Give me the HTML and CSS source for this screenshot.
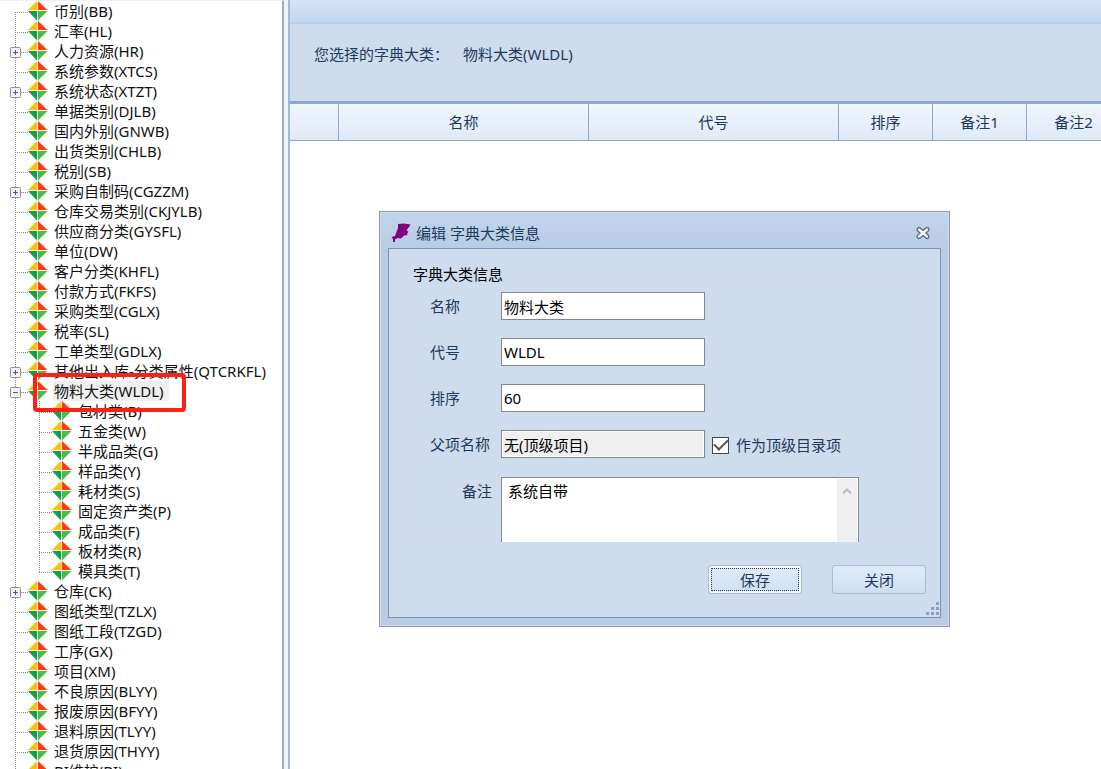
FILE: index.html
```
<!DOCTYPE html>
<html lang="zh-CN">
<head>
<meta charset="utf-8">
<title>字典大类</title>
<link rel="stylesheet" href="styles.css">
</head>
<body>
<svg class="defs" aria-hidden="true">
  <symbol id="gem" viewBox="0 0 20 20">
    <path fill="#ffc000" d="M9 0V9H0z"/>
    <path fill="#ff3a12" d="M10 0V9H19.500z"/>
    <path fill="#0ea04b" d="M0 10H9V19.500z"/>
    <path fill="#4cbb4c" d="M10 10H19.500L10 19.500z"/>
  </symbol>
  <symbol id="plus" viewBox="0 0 11 11">
    <rect x=".5" y=".5" width="10" height="10" rx="1" fill="#f3f3f3" stroke="#919191"/>
    <path d="M3 5.500h5M5.500 3v5" stroke="#3e57a8"/>
  </symbol>
  <symbol id="minus" viewBox="0 0 11 11">
    <rect x=".5" y=".5" width="10" height="10" rx="1" fill="#f3f3f3" stroke="#919191"/>
    <path d="M3 5.500h5" stroke="#3e57a8"/>
  </symbol>
</svg>
<div class="app">
  <nav class="sidebar" aria-label="字典">
    <ul class="tree">
      <li><div class="row"><span class="slot"></span><svg class="gem"><use href="#gem"/></svg><span class="name">币别(BB)</span></div></li>
      <li><div class="row"><span class="slot"></span><svg class="gem"><use href="#gem"/></svg><span class="name">汇率(HL)</span></div></li>
      <li><div class="row"><button class="slot" aria-label="展开"><svg><use href="#plus"/></svg></button><svg class="gem"><use href="#gem"/></svg><span class="name">人力资源(HR)</span></div></li>
      <li><div class="row"><span class="slot"></span><svg class="gem"><use href="#gem"/></svg><span class="name">系统参数(XTCS)</span></div></li>
      <li><div class="row"><button class="slot" aria-label="展开"><svg><use href="#plus"/></svg></button><svg class="gem"><use href="#gem"/></svg><span class="name">系统状态(XTZT)</span></div></li>
      <li><div class="row"><span class="slot"></span><svg class="gem"><use href="#gem"/></svg><span class="name">单据类别(DJLB)</span></div></li>
      <li><div class="row"><span class="slot"></span><svg class="gem"><use href="#gem"/></svg><span class="name">国内外别(GNWB)</span></div></li>
      <li><div class="row"><span class="slot"></span><svg class="gem"><use href="#gem"/></svg><span class="name">出货类别(CHLB)</span></div></li>
      <li><div class="row"><span class="slot"></span><svg class="gem"><use href="#gem"/></svg><span class="name">税别(SB)</span></div></li>
      <li><div class="row"><button class="slot" aria-label="展开"><svg><use href="#plus"/></svg></button><svg class="gem"><use href="#gem"/></svg><span class="name">采购自制码(CGZZM)</span></div></li>
      <li><div class="row"><span class="slot"></span><svg class="gem"><use href="#gem"/></svg><span class="name">仓库交易类别(CKJYLB)</span></div></li>
      <li><div class="row"><span class="slot"></span><svg class="gem"><use href="#gem"/></svg><span class="name">供应商分类(GYSFL)</span></div></li>
      <li><div class="row"><span class="slot"></span><svg class="gem"><use href="#gem"/></svg><span class="name">单位(DW)</span></div></li>
      <li><div class="row"><span class="slot"></span><svg class="gem"><use href="#gem"/></svg><span class="name">客户分类(KHFL)</span></div></li>
      <li><div class="row"><span class="slot"></span><svg class="gem"><use href="#gem"/></svg><span class="name">付款方式(FKFS)</span></div></li>
      <li><div class="row"><span class="slot"></span><svg class="gem"><use href="#gem"/></svg><span class="name">采购类型(CGLX)</span></div></li>
      <li><div class="row"><span class="slot"></span><svg class="gem"><use href="#gem"/></svg><span class="name">税率(SL)</span></div></li>
      <li><div class="row"><span class="slot"></span><svg class="gem"><use href="#gem"/></svg><span class="name">工单类型(GDLX)</span></div></li>
      <li><div class="row"><button class="slot" aria-label="展开"><svg><use href="#plus"/></svg></button><svg class="gem"><use href="#gem"/></svg><span class="name">其他出入库-分类属性(QTCRKFL)</span></div></li>
      <li>
        <div class="row selected"><button class="slot" aria-label="折叠"><svg><use href="#minus"/></svg></button><svg class="gem"><use href="#gem"/></svg><span class="name">物料大类(WLDL)</span><span class="marker"></span></div>
        <ul class="children">
          <li><div class="row"><svg class="gem"><use href="#gem"/></svg><span class="name">包材类(B)</span></div></li>
          <li><div class="row"><svg class="gem"><use href="#gem"/></svg><span class="name">五金类(W)</span></div></li>
          <li><div class="row"><svg class="gem"><use href="#gem"/></svg><span class="name">半成品类(G)</span></div></li>
          <li><div class="row"><svg class="gem"><use href="#gem"/></svg><span class="name">样品类(Y)</span></div></li>
          <li><div class="row"><svg class="gem"><use href="#gem"/></svg><span class="name">耗材类(S)</span></div></li>
          <li><div class="row"><svg class="gem"><use href="#gem"/></svg><span class="name">固定资产类(P)</span></div></li>
          <li><div class="row"><svg class="gem"><use href="#gem"/></svg><span class="name">成品类(F)</span></div></li>
          <li><div class="row"><svg class="gem"><use href="#gem"/></svg><span class="name">板材类(R)</span></div></li>
          <li><div class="row"><svg class="gem"><use href="#gem"/></svg><span class="name">模具类(T)</span></div></li>
        </ul>
      </li>
      <li><div class="row"><button class="slot" aria-label="展开"><svg><use href="#plus"/></svg></button><svg class="gem"><use href="#gem"/></svg><span class="name">仓库(CK)</span></div></li>
      <li><div class="row"><span class="slot"></span><svg class="gem"><use href="#gem"/></svg><span class="name">图纸类型(TZLX)</span></div></li>
      <li><div class="row"><span class="slot"></span><svg class="gem"><use href="#gem"/></svg><span class="name">图纸工段(TZGD)</span></div></li>
      <li><div class="row"><span class="slot"></span><svg class="gem"><use href="#gem"/></svg><span class="name">工序(GX)</span></div></li>
      <li><div class="row"><span class="slot"></span><svg class="gem"><use href="#gem"/></svg><span class="name">项目(XM)</span></div></li>
      <li><div class="row"><span class="slot"></span><svg class="gem"><use href="#gem"/></svg><span class="name">不良原因(BLYY)</span></div></li>
      <li><div class="row"><span class="slot"></span><svg class="gem"><use href="#gem"/></svg><span class="name">报废原因(BFYY)</span></div></li>
      <li><div class="row"><span class="slot"></span><svg class="gem"><use href="#gem"/></svg><span class="name">退料原因(TLYY)</span></div></li>
      <li><div class="row"><span class="slot"></span><svg class="gem"><use href="#gem"/></svg><span class="name">退货原因(THYY)</span></div></li>
      <li><div class="row"><span class="slot"></span><svg class="gem"><use href="#gem"/></svg><span class="name">BI维护(BI)</span></div></li>
    </ul>
  </nav>

  <main class="main">
    <div class="caption"></div>
    <div class="info"><span>您选择的字典大类：</span><span>物料大类(WLDL)</span></div>
    <table class="grid">
      <thead>
        <tr><th class="mark"></th><th class="wide">名称</th><th class="wide">代号</th><th>排序</th><th>备注1</th><th>备注2</th></tr>
      </thead>
    </table>
  </main>
</div>

<section class="dialog" role="dialog" aria-labelledby="dlg-title">
  <header class="titlebar">
    <svg class="logo" viewBox="0 0 20 20"><path fill="#800080" d="M7 1L13 0.500 19.500 1.500 18 4 15.500 7 17.500 9 16 10.500 16.500 12 13 12.500 10 15.500 6.500 15 4 16.500 4 19 2 19 2 16 0.500 14 4 13 5.500 9 7 5z"/></svg>
    <h1 id="dlg-title">编辑 字典大类信息</h1>
    <button class="close" aria-label="关闭窗口"><svg viewBox="0 0 16 14"><path d="M4 3.500L12 10.500M12 3.500L4 10.500" stroke="#5c6780" stroke-width="5" stroke-linecap="round"/><path d="M4 3.500L12 10.500M12 3.500L4 10.500" stroke="#f4f7fc" stroke-width="2.500" stroke-linecap="round"/></svg></button>
  </header>
  <form class="body">
    <fieldset>
      <legend>字典大类信息</legend>
      <div class="field"><label for="f-name">名称</label><input id="f-name" type="text" value="物料大类"></div>
      <div class="field"><label for="f-code">代号</label><input id="f-code" type="text" value="WLDL"></div>
      <div class="field"><label for="f-order">排序</label><input id="f-order" type="text" value="60"></div>
      <div class="field"><label for="f-parent">父项名称</label><input id="f-parent" type="text" value="无(顶级项目)" readonly>
        <label class="check"><input type="checkbox" checked>作为顶级目录项</label></div>
      <div class="field memo"><label for="f-memo">备注</label>
        <div class="memobox"><textarea id="f-memo">系统自带</textarea><span class="scroll"><svg viewBox="0 0 10 8"><path d="M1 6.500L5 2.500 9 6.500" fill="none" stroke="#bdbdbd" stroke-width="2"/></svg></span></div></div>
    </fieldset>
    <div class="actions"><button type="button" class="focused">保存</button><button type="button">关闭</button></div>
    <svg class="grip" viewBox="0 0 14 14" fill="#8ba1bf"><path d="M11 0h3v3h-3zM6 5h3v3h-3zM11 5h3v3h-3zM1 10h3v3h-3zM6 10h3v3h-3zM11 10h3v3h-3z"/></svg>
  </form>
</section>
</body>
</html>
```
FILE: styles.css
```
* { box-sizing: border-box; }
body {
  margin: 0;
  height: 100vh;
  overflow: hidden;
  position: relative;
  background: #fff;
  color: #1e395b;
  font: 15px/20px "Noto Sans", "Noto Sans CJK SC", sans-serif;
}
button, input, textarea { font: inherit; color: inherit; margin: 0; }
.defs { position: absolute; width: 0; height: 0; }

.app { display: flex; height: 100%; background: #f0f3f8; }

.sidebar {
  flex: 0 0 284px;
  overflow: hidden;
  background: #fff;
  border-top: 1px solid #f0f0f0;
  border-right: 2px solid #a6acb5;
  color: #111;
}
.tree, .children { list-style: none; margin: 0; padding: 0; }
.tree {
  background: repeating-linear-gradient(to bottom, #8c8c8c 0 1px, transparent 1px 2px) 15px 11px / 1px 100% no-repeat;
}
.children {
  background: repeating-linear-gradient(to bottom, #8c8c8c 0 1px, transparent 1px 2px) 39px 0 / 1px 171px no-repeat;
}
.row {
  position: relative;
  display: flex;
  align-items: center;
  height: 20px;
  padding-left: 10px;
  white-space: nowrap;
  background: repeating-linear-gradient(to right, #8c8c8c 0 1px, transparent 1px 2px) 15px 11px / 13px 1px no-repeat;
}
.children .row { padding-left: 52px; background-position: 39px 11px; }
.slot {
  display: flex;
  width: 11px;
  height: 11px;
  margin: 2px 7px 0 0;
  padding: 0;
  border: 0;
  background: none;
}
.slot svg { width: 11px; height: 11px; }
.gem { width: 20px; height: 20px; flex: none; }
.name { margin-left: 5px; padding: 0 1px; }
.selected .name { background: #efefef; padding-right: 5px; }
.marker {
  position: absolute;
  z-index: 1;
  left: 33px;
  top: -8px;
  width: 153px;
  height: 39px;
  border: 4px solid #fe2015;
  border-radius: 4px;
}

.main {
  flex: 1;
  min-width: 0;
  margin-left: 4px;
  overflow: hidden;
  background: #fff;
  border-left: 2px solid #a3b9d8;
}
.caption {
  height: 24px;
  background: linear-gradient(#d4e4f7, #c3d7f0);
  border-bottom: 2px solid #b8cfe8;
}
.info {
  display: flex;
  gap: 14px;
  height: 80px;
  padding: 20px 24px;
  background: #cfdced;
  border-bottom: 3px solid #8fa7c8;
}
.grid { table-layout: fixed; width: 831px; border-collapse: separate; border-spacing: 0; }
.grid th {
  width: 94px;
  height: 37px;
  padding: 0;
  font-weight: 400;
  text-align: center;
  background: linear-gradient(#f0f5fd, #dfeaf8);
  border-right: 1px solid #8fa8cb;
  border-bottom: 1px solid #8aa5ca;
}
.grid .mark { width: 49px; }
.grid .wide { width: 250px; }

.dialog {
  position: absolute;
  left: 379px;
  top: 211px;
  width: 571px;
  padding: 0 8px 8px;
  background: linear-gradient(#c3d5ec, #bacce5 36px);
  border: 1px solid #8d9aae;
  box-shadow: inset 0 0 0 1px #cbdcf0;
}
.titlebar { display: flex; align-items: center; height: 36px; padding: 6px 10px 0 3px; }
.logo { width: 20px; height: 20px; }
.titlebar h1 { flex: 1; margin: 0 0 0 5px; font-size: 15px; font-weight: 400; }
.close { display: flex; width: 16px; height: 14px; padding: 0; border: 0; background: none; }
.close svg { width: 16px; height: 14px; }

.body {
  position: relative;
  padding: 15px 14px 23px;
  background: #cfdced;
  border: 1px solid #7695bd;
}
fieldset { margin: 0; padding: 8px 0 0 26px; border: 1px solid #d9dbde; min-width: 0; }
legend { margin-left: -19px; padding: 0 2px; color: #000; }
.field { display: flex; align-items: center; height: 28px; margin-bottom: 18px; }
.field > label:first-child { flex: 0 0 71px; }
.field > input {
  width: 204px;
  height: 28px;
  padding: 0 2px;
  color: #000;
  background: #fff;
  border: 1px solid #85888c;
  border-radius: 0;
}
.field > input[readonly] { background: #efefef; box-shadow: inset 0 0 0 1px #fff; }
.check { display: flex; align-items: center; gap: 7px; margin-left: 7px; padding-top: 2px; }
.check input {
  appearance: none;
  width: 17px;
  height: 17px;
  border: 1px solid #444;
  background: #fff;
  display: grid;
  place-items: center;
}
.check input:checked::before {
  content: "";
  width: 12px;
  height: 6px;
  border: solid #555;
  border-width: 0 0 2px 2px;
  transform: translateY(-2px) rotate(-45deg);
}
.memo { align-items: flex-start; height: 65px; margin: 19px 0 -1px; }
.memo > label:first-child { padding: 4px 9px 0 0; text-align: right; }
.memobox {
  display: flex;
  width: 358px;
  height: 65px;
  background: #fff;
  border: 1px solid #85888c;
  border-bottom: 0;
}
.memobox textarea {
  flex: 1;
  min-width: 0;
  padding: 3px 6px;
  border: 0;
  color: #000;
  background: none;
  resize: none;
  overflow: hidden;
}
.scroll { width: 20px; margin: 1px 1px 0 0; padding: 8px 5px; background: #efefef; }
.scroll svg { display: block; width: 10px; height: 8px; }

.actions { display: flex; justify-content: flex-end; gap: 30px; margin-top: 23px; }
.actions button {
  width: 94px;
  height: 29px;
  padding: 0;
  background: linear-gradient(#e0ebf8, #cfdff0);
  border: 1px solid #a9bcd4;
  border-radius: 3px;
}
.actions .focused {
  box-shadow: inset 0 0 0 2px #f7fafd;
  outline: 1px dotted #1e395b;
  outline-offset: -4px;
}
.grip { position: absolute; right: 1px; bottom: 1px; width: 14px; height: 14px; }

:focus-visible { outline: 1px dotted #1e395b; }
```
